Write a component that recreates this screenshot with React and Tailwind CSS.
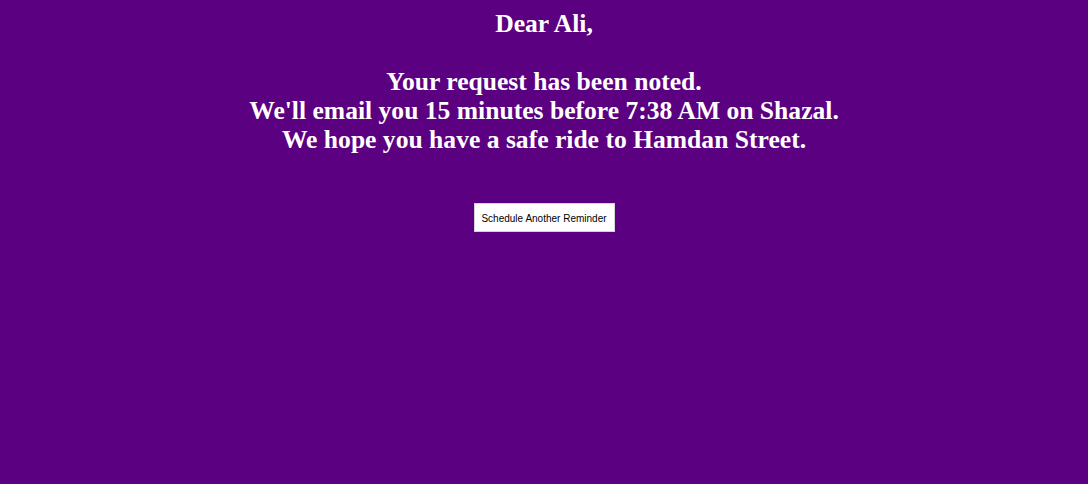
import React from 'react';

const App = () => {
  return (
    <div className="min-h-[484px] w-full bg-[#5b0080] flex flex-col items-center">
      <h2 className="mt-[9px] text-center text-white font-bold text-[25.6px] leading-[29px] font-['Liberation_Serif',serif]">
        Dear Ali,
        <br />
        <br />
        Your request has been noted.
        <br />
        We'll email you 15 minutes before 7:38 AM on Shazal.
        <br />
        We hope you have a safe ride to Hamdan Street.
      </h2>
      <button className="mt-[49px] w-[141px] h-[29px] pt-[2px] bg-white border border-[#d4d4d4] text-[10px] text-black font-['Liberation_Sans',sans-serif]">
        Schedule Another Reminder
      </button>
    </div>
  );
};

export default App;
